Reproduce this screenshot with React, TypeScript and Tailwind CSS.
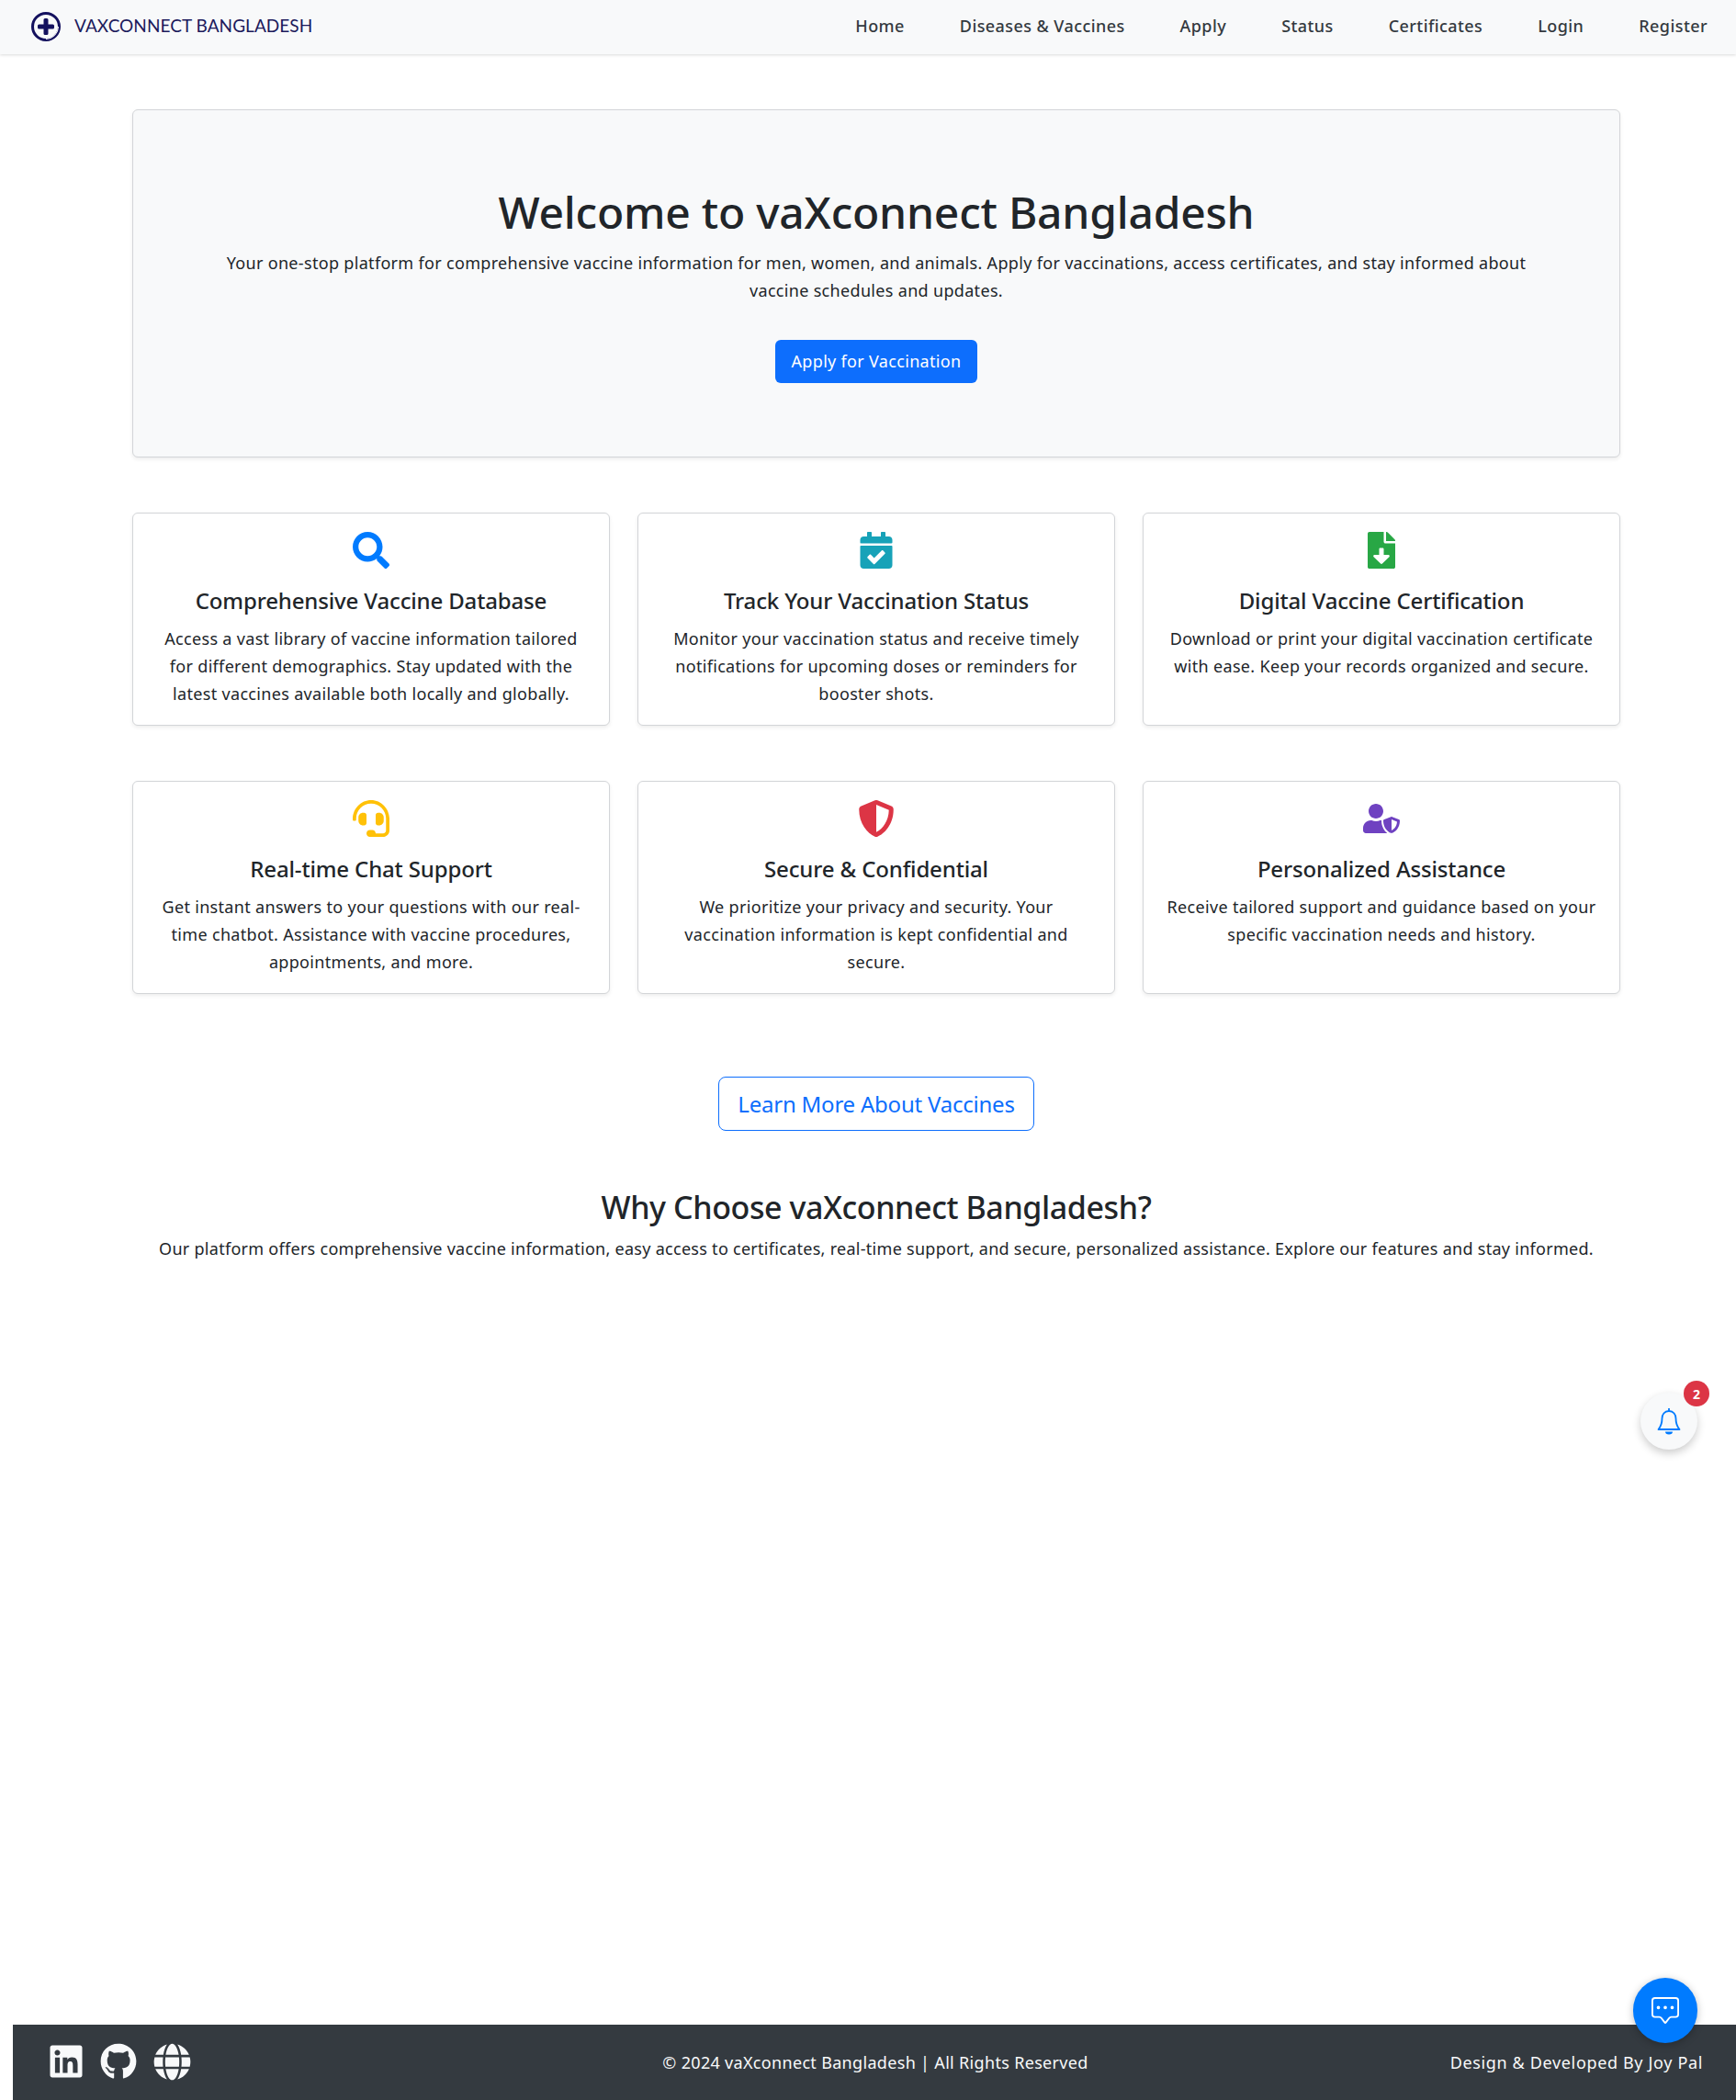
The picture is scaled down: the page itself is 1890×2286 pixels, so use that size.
import { FaSearch, FaCalendarCheck, FaFileDownload, FaHeadset, FaShieldAlt, FaUserShield, FaLinkedin, FaGithub, FaGlobe } from "react-icons/fa";
import { BsChatSquareDots } from "react-icons/bs";

const links = ["Home", "Diseases & Vaccines", "Apply", "Status", "Certificates", "Login", "Register"];

const features = [
  { icon: <FaSearch className="text-[#007bff]" />, title: "Comprehensive Vaccine Database", text: ["Access a vast library of vaccine information tailored", "for different demographics. Stay updated with the", "latest vaccines available both locally and globally."] },
  { icon: <FaCalendarCheck className="text-[#17a2b8]" />, title: "Track Your Vaccination Status", text: ["Monitor your vaccination status and receive timely", "notifications for upcoming doses or reminders for", "booster shots."] },
  { icon: <FaFileDownload className="text-[#28a745]" />, title: "Digital Vaccine Certification", text: ["Download or print your digital vaccination certificate", "with ease. Keep your records organized and secure."] },
  { icon: <FaHeadset className="text-[#ffc107]" />, title: "Real-time Chat Support", text: ["Get instant answers to your questions with our real-", "time chatbot. Assistance with vaccine procedures,", "appointments, and more."] },
  { icon: <FaShieldAlt className="text-[#dc3545]" />, title: "Secure & Confidential", text: ["We prioritize your privacy and security. Your", "vaccination information is kept confidential and", "secure."] },
  { icon: <FaUserShield className="text-[#6f42c1]" />, title: "Personalized Assistance", text: ["Receive tailored support and guidance based on your", "specific vaccination needs and history."] },
];

function Logo() {
  return (
    <svg width="34" height="34" viewBox="0 0 34 34" fill="none">
      <circle cx="17" cy="17" r="14.5" stroke="#14115e" strokeWidth="3" />
      <path d="M17 30.5a13.5 13.5 0 0 0 13.5-13.5" stroke="#fff" strokeWidth="1" />
      <path d="M14.5 9.5a1.5 1.5 0 0 1 1.5-1.5h2a1.5 1.5 0 0 1 1.5 1.5v5h5a1.5 1.5 0 0 1 1.5 1.5v2a1.5 1.5 0 0 1-1.5 1.5h-5v5a1.5 1.5 0 0 1-1.5 1.5h-2a1.5 1.5 0 0 1-1.5-1.5v-5h-5A1.5 1.5 0 0 1 8 18v-2a1.5 1.5 0 0 1 1.5-1.5h5z" fill="#14115e" />
    </svg>
  );
}

function Bell() {
  return (
    <svg width="26" height="30" viewBox="0 0 26 30" fill="none">
      <path d="M13 1v3M13 4c-5 0-7.5 4-7.5 8 0 5-1.5 9-4 12h23c-2.5-3-4-7-4-12 0-4-2.5-8-7.5-8z" stroke="#007bff" strokeWidth="1.8" strokeLinejoin="round" />
      <path d="M9 26.5h8a4 3 0 0 1-8 0z" fill="#007bff" />
    </svg>
  );
}

export default function App() {
  return (
    <div className="relative flex min-h-[2286px] flex-col bg-white font-['Noto_Sans',sans-serif] text-[#212529]">
      <nav className="flex h-[59px] items-center justify-between bg-[#f8f9fa] pb-[2px] pl-[33px] pr-[31px] shadow-[0_1px_3px_rgba(0,0,0,0.15)]">
        <div className="flex items-center gap-[14px]">
          <Logo />
          <span className="font-['Lato',sans-serif] text-[19px] tracking-[0.05px] text-[#1c1a5c]">VAXCONNECT BANGLADESH</span>
        </div>
        <ul className="flex gap-[60px]">
          {links.map((l) => (
            <li key={l} className="text-[18px] font-medium tracking-[0.42px] text-[#343a40]">{l}</li>
          ))}
        </ul>
      </nav>

      <main className="flex-1 pl-[144px] pr-[126px] pt-[60px]">
        <section className="flex h-[379px] flex-col items-center rounded-[6px] border border-[#d3d5d8] bg-[#f8f9fa] pt-[82px] shadow-[0_2px_4px_rgba(0,0,0,0.075)]">
          <h1 className="text-[48px] font-medium leading-[58px] tracking-[-0.23px]">Welcome to vaXconnect Bangladesh</h1>
          <p className="mt-[11px] text-center text-[18px] leading-[30px] tracking-[0.32px]">
            Your one-stop platform for comprehensive vaccine information for men, women, and animals. Apply for vaccinations, access certificates, and stay informed about<br />vaccine schedules and updates.
          </p>
          <button className="mt-[39px] h-[47px] rounded-[6px] bg-[#0d6efd] px-[18px] text-[18px] tracking-[0.32px] text-white">Apply for Vaccination</button>
        </section>

        <div className="mt-[60px] grid grid-cols-3 gap-x-[30px] gap-y-[60px]">
          {features.map((f) => (
            <div key={f.title} className="flex h-[232px] flex-col items-center rounded-[6px] border border-[#d3d5d8] bg-white pt-[20px] text-center shadow-[0_2px_4px_rgba(0,0,0,0.075)]">
              <div className="flex h-[40px] items-center text-[40px]">{f.icon}</div>
              <h3 className="mt-[18px] text-[24px] font-medium leading-[34px] tracking-[-0.15px]">{f.title}</h3>
              <p className="mt-[9px] text-[18px] leading-[30px] tracking-[0.32px]">
                {f.text.map((t) => (<span key={t} className="block">{t}</span>))}
              </p>
            </div>
          ))}
        </div>

        <div className="mt-[90px] flex justify-center">
          <button className="h-[59px] w-[344px] rounded-[8px] border border-[#0d6efd] text-[24px] tracking-[-0.22px] text-[#0d6efd]">Learn More About Vaccines</button>
        </div>

        <h2 className="mt-[60px] text-center text-[34px] font-medium leading-[46px] tracking-[-0.4px]">Why Choose vaXconnect Bangladesh?</h2>
        <p className="mt-[7px] text-center text-[18px] leading-[30px] tracking-[0.28px]">Our platform offers comprehensive vaccine information, easy access to certificates, real-time support, and secure, personalized assistance. Explore our features and stay informed.</p>
      </main>

      <footer className="ml-[14px] grid h-[82px] grid-cols-3 items-center bg-[#343a40] pb-[2px] pl-[38px] pr-[36px] text-[18px] text-[#f8f9fa]">
        <div className="flex items-center gap-[17px] text-[40px]">
          <FaLinkedin />
          <FaGithub />
          <FaGlobe className="ml-[1px] text-[41px]" />
        </div>
        <span className="mt-[2px] text-center tracking-[0.32px]">© 2024 vaXconnect Bangladesh | All Rights Reserved</span>
        <span className="mt-[2px] text-right tracking-[0.65px]">Design &amp; Developed By Joy Pal</span>
      </footer>

      <button className="absolute left-[1786px] top-[1516px] flex h-[62px] w-[62px] items-center justify-center rounded-full bg-[#f8f9fa] shadow-[0_4px_10px_rgba(0,0,0,0.2)]">
        <Bell />
      </button>
      <span className="absolute left-[1833px] top-[1503px] flex h-[28px] w-[28px] items-center justify-center rounded-full bg-[#dc3545] text-[14px] font-bold text-white">2</span>
      <button className="absolute left-[1778px] top-[2153px] flex h-[71px] w-[70px] items-center justify-center rounded-full bg-[#007bff] text-[30px] text-white shadow-[0_2px_8px_rgba(0,0,0,0.25)]">
        <BsChatSquareDots />
      </button>
    </div>
  );
}
